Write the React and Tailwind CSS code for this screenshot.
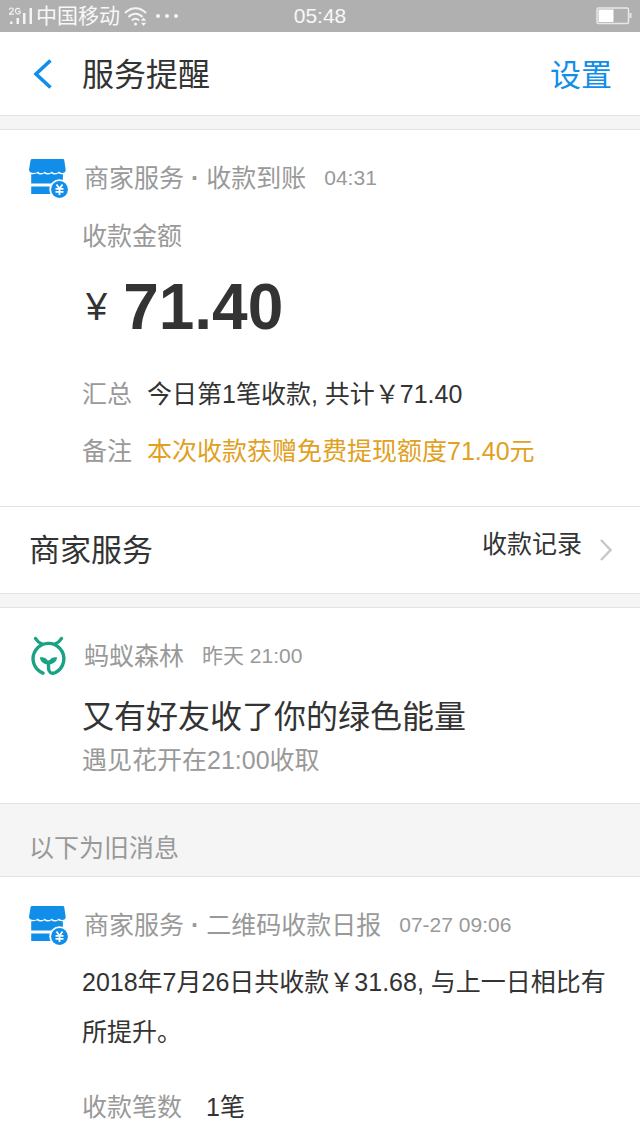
import { Fragment } from 'react';

// ─── Icons ────────────────────────────────────────────────────────────────────
function SignalIcon() {
  return (
    <svg className="w-7 h-6" viewBox="0 0 28 24" fill="#f4f4f4" aria-hidden="true">
      <g fill="none" stroke="#f4f4f4" strokeWidth="1.2">
        <path d="M1.500 5.800c0-2.400 3.800-2.400 3.800 0 0 1.700-3.600 2.600-3.800 4.400h4.500" />
        <path d="M12 5.600c-1-2-4.600-1.700-4.600 1.500s3.500 3.500 4.700 2V7.300h-2" />
      </g>
      <rect x="2" y="17.500" width="2.500" height="2.500" />
      <rect x="8.500" y="14" width="2.500" height="6" />
      <rect x="15" y="9" width="2.500" height="11" />
      <rect x="21.500" y="4" width="2.500" height="16" />
    </svg>
  );
}

function WifiIcon() {
  return (
    <svg className="w-6 h-5" viewBox="0 0 24 20" fill="none" stroke="#f4f4f4" strokeWidth="2" aria-hidden="true">
      <path d="M1 7c6-6.500 15-6.500 21 0" />
      <path d="M4.500 11c4-4.500 10-4.500 14 0" />
      <path d="M8 14.500c2-2.300 5-2.300 7 0" />
      <circle cx="11.500" cy="18" r="1.600" fill="#f4f4f4" stroke="none" />
      <path d="M19.500 11.500l2.600 3.300h-5.200zM19.500 20l2.600-3.300h-5.200z" fill="#f4f4f4" stroke="none" />
    </svg>
  );
}

function BatteryIcon() {
  return (
    <svg className="w-9 h-[18px]" viewBox="0 0 36 18" fill="none" aria-hidden="true">
      <rect x="1" y="1" width="31.500" height="15.500" rx="1.500" stroke="#e8e8e8" strokeWidth="1.500" />
      <rect x="2.500" y="2.500" width="15" height="12.500" fill="#fff" />
      <rect x="33.500" y="6" width="2" height="5" fill="#e8e8e8" />
    </svg>
  );
}

function ShopIcon() {
  return (
    <svg className="w-10 h-10 shrink-0" viewBox="0 0 40 40" aria-hidden="true">
      <path
        d="M4 1h31q1 0 1.200 1l1.500 10c0 2-1.500 3-3.500 3-1.600 0-2.600-.6-3.400-1.400-1.800 2-5.200 2-7 0-1.800 2-5.200 2-7 0-1.800 2-5.200 2-7 0-1 1.200-2.300 1.400-3.700 1.400C3 15 1 14 1 12L2.600 2q.3-1 1.400-1z"
        fill="#108ee9"
      />
      <path d="M3.200 16.200c2.200 0 4-.2 5.800-1 2 1.600 5 1.600 7.200 0 2 1.600 5 1.600 7 0 2 1.600 5 1.600 7 0 1.300.7 2.800 1 4.700 1v9.300H3.200z" fill="#108ee9" />
      <path d="M3.200 28.500H24V36H3.200z" fill="#108ee9" />
      <circle cx="31.500" cy="31.500" r="10.200" fill="#fff" />
      <circle cx="31.500" cy="31.500" r="8.400" fill="#108ee9" />
      <path d="M28.500 26.500l3 4.300 3-4.300M31.500 30.800v6.200M27.500 30.800h8M27.500 33.800h8" fill="none" stroke="#fff" strokeWidth="1.800" />
    </svg>
  );
}

function ForestIcon() {
  return (
    <svg className="w-10 h-10 shrink-0" viewBox="0 0 40 40" fill="none" stroke="#1aa284" strokeWidth="3.400" strokeLinecap="round" aria-hidden="true">
      <path d="M7.500 2.500C9 5 11.500 7 14 8M33.500 2.500C32 5 29.500 7 27 8" />
      <path d="M15 37.200A15.400 15.400 0 1 1 27.500 36.500C23 38.500 20.500 36 20.500 32V26" />
      <path
        d="M20.300 28.500c-4.500 0-8-3-8.500-7.200 4.500-.8 7.900 1.600 8.700 4.900.8-3.300 4.200-5.700 8.700-4.900-.5 4.200-4.200 7.200-8.900 7.200z"
        fill="#1aa284"
        stroke="none"
      />
    </svg>
  );
}

// ─── Layout pieces ────────────────────────────────────────────────────────────
function StatusBar() {
  return (
    <div className="grid grid-cols-[1fr_auto_1fr] items-center h-8 px-2 bg-[#b0b0b0] text-[#f8f8f8] text-[21px] leading-8">
      <div className="flex items-center">
        <SignalIcon />
        <span>中国移动</span>
        <span className="ml-1"><WifiIcon /></span>
        <span className="flex gap-1 ml-2">
          {[0, 1, 2].map(i => <i key={i} className="w-1 h-1 rounded-full bg-[#f4f4f4] mr-px" />)}
        </span>
      </div>
      <time>05:48</time>
      <div className="flex justify-end"><BatteryIcon /></div>
    </div>
  );
}

function Divider() {
  return <div className="h-[15px] bg-[#f5f5f5] border-y border-[#e3e3e3]" />;
}

function CardHeader({ icon, title, topic, time }) {
  return (
    <header className="flex items-center px-7 text-[#999]">
      {icon}
      <h2 className="ml-4 leading-10">
        {title}
        {topic && <> <b>·</b> {topic}</>}
      </h2>
      <time className="ml-[18px] text-[21px] leading-10">{time}</time>
    </header>
  );
}

function Details({ rows }) {
  return (
    <dl className="grid grid-cols-[auto_1fr] gap-x-[15px] gap-y-5">
      {rows.map(({ label, value, color }) => (
        <Fragment key={label}>
          <dt className="text-[#999]">{label}</dt>
          <dd className={color}>{value}</dd>
        </Fragment>
      ))}
    </dl>
  );
}

const summary = [
  { label: '汇总', value: '今日第1笔收款, 共计￥71.40', color: 'text-[#333]' },
  { label: '备注', value: '本次收款获赠免费提现额度71.40元', color: 'text-[#e1a01e]' },
];

export default function App() {
  return (
    <div className="bg-white text-[#333] text-[25px] leading-[37px] font-['Liberation_Sans','Noto_Sans_CJK_SC',sans-serif]">
      <StatusBar />

      <nav className="flex items-center h-[83px] pt-1 pl-8 pr-7 text-[32px]">
        <button type="button" aria-label="返回" className="mr-7 mb-1">
          <svg className="w-[22px] h-8" viewBox="0 0 22 32" fill="none" stroke="#108ee9" strokeWidth="3.600" aria-hidden="true">
            <path d="M18.500 2.500L4 16l14.500 13.500" />
          </svg>
        </button>
        <h1>服务提醒</h1>
        <button type="button" className="ml-auto text-[31px] text-[#108ee9]">设置</button>
      </nav>

      <Divider />

      <article className="pt-7 pb-9">
        <CardHeader icon={<ShopIcon />} title="商家服务" topic="收款到账" time="04:31" />
        <div className="pl-[82px] pr-7">
          <p className="mt-5 text-[#999]">收款金额</p>
          <p className="flex items-center gap-4 mt-4 mb-8 pl-1 leading-[73px]">
            <span className="text-[38px]">¥</span>
            <strong className="text-[64px]">71.40</strong>
          </p>
          <Details rows={summary} />
        </div>
      </article>

      <a href="#records" className="flex items-center h-[87px] pl-[29px] pr-7 border-t border-[#e3e3e3]">
        <span className="text-[31px]">商家服务</span>
        <span className="ml-auto mb-3">收款记录</span>
        <svg className="w-3 h-6 ml-[18px]" viewBox="0 0 12 24" fill="none" stroke="#c7c7cc" strokeWidth="2.500" aria-hidden="true">
          <path d="M1 2l9.500 10L1 22" />
        </svg>
      </a>

      <Divider />

      <article className="pt-7 pb-6">
        <CardHeader icon={<ForestIcon />} title="蚂蚁森林" time="昨天 21:00" />
        <div className="pl-[82px] pr-7">
          <h3 className="mt-4 text-[32px] leading-[50px]">又有好友收了你的绿色能量</h3>
          <p className="text-[#999]">遇见花开在21:00收取</p>
        </div>
      </article>

      <p className="pt-6 pb-2 pl-[29px] bg-[#f5f5f5] border-y border-[#e3e3e3] text-[#999] leading-10">以下为旧消息</p>

      <article className="pt-7">
        <CardHeader icon={<ShopIcon />} title="商家服务" topic="二维码收款日报" time="07-27 09:06" />
        <div className="pl-[82px] pr-6">
          <p className="mt-3 mb-8 leading-[50px]">2018年7月26日共收款￥31.68, 与上一日相比有所提升。</p>
          <dl className="flex gap-6 pb-2">
            <dt className="text-[#999]">收款笔数</dt>
            <dd>1笔</dd>
          </dl>
        </div>
      </article>
    </div>
  );
}
